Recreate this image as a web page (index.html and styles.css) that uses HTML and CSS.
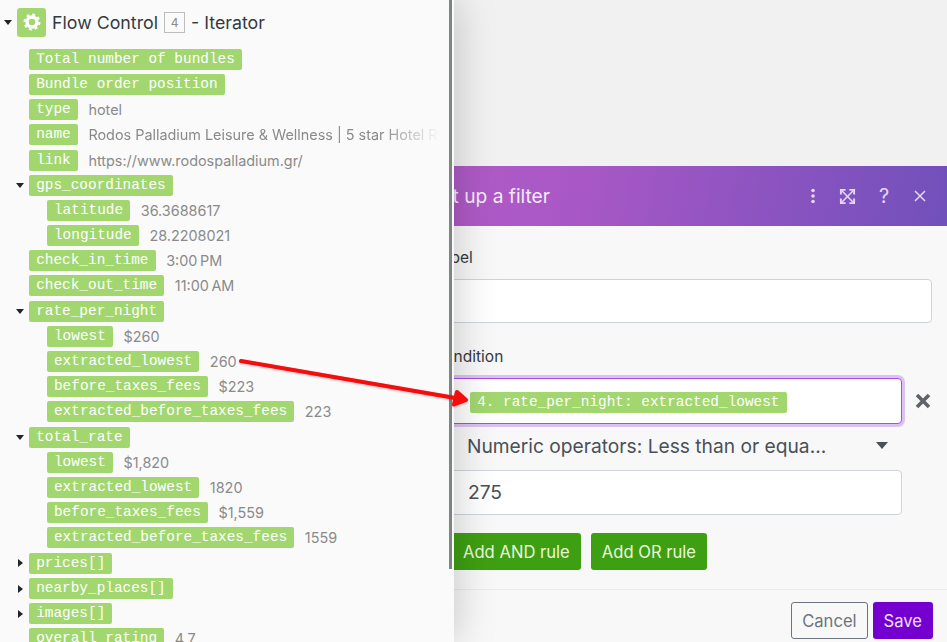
FILE: index.html
```html
<!DOCTYPE html>
<html lang="en">
<head>
<meta charset="utf-8">
<title>Set up a filter</title>
<link rel="stylesheet" href="styles.css">
</head>
<body>
<section class="modal">
  <header class="modal-head">
    <h2 class="modal-title">Set up a filter</h2>
    <div class="modal-tools">
      <svg class="tool-dots" width="16" height="18" viewBox="0 0 16 18"><g fill="#e6d8f3"><circle cx="8" cy="3.500" r="1.800"/><circle cx="8" cy="9" r="1.800"/><circle cx="8" cy="14.500" r="1.800"/></g></svg>
      <svg class="tool-expand" width="17" height="17" viewBox="0 0 18 18" fill="none" stroke="#e6d8f3" stroke-width="1.600"><path d="M3 3l12 12M15 3L3 15"/><path d="M7 2H2v5M11 2h5v5M7 16H2v-5M11 16h5v-5" stroke-width="2"/></svg>
      <span class="tool-q">?</span>
      <svg class="tool-x" width="14" height="14" viewBox="0 0 14 14" fill="none" stroke="#e6d8f3" stroke-width="1.500"><path d="M2 2l10 10M12 2L2 12"/></svg>
    </div>
  </header>
  <div class="modal-body">
    <label class="field-label">Label</label>
    <div class="input input-wide"></div>
    <label class="field-label field-label-cond">Condition</label>
    <div class="cond-row">
      <div class="input input-focus"><span class="pill">4. rate_per_night: extracted_lowest</span></div>
      <svg class="remove" width="16" height="16" viewBox="0 0 16 16" fill="none" stroke="#5f6368" stroke-width="3.600"><path d="M2 2l12 12M14 2L2 14"/></svg>
    </div>
    <div class="select-row">
      <span>Numeric operators: Less than or equa...</span>
      <svg width="14" height="8" viewBox="0 0 14 8"><path d="M1 0h12L7 7z" fill="#495057"/></svg>
    </div>
    <div class="input input-value">275</div>
    <div class="rule-buttons">
      <button class="btn btn-green">Add AND rule</button>
      <button class="btn btn-green">Add OR rule</button>
    </div>
  </div>
  <footer class="modal-foot">
    <button class="btn btn-cancel">Cancel</button>
    <button class="btn btn-save">Save</button>
  </footer>
</section>

<aside class="panel">
  <div class="head">
    <svg class="caret" width="8" height="5" viewBox="0 0 8 5"><path d="M0 0h8L4 5z"/></svg>
    <span class="app-icon">
      <svg width="18" height="18" viewBox="0 0 18 18"><circle cx="9" cy="9" r="5" fill="none" stroke="#fff" stroke-width="3.400"/><circle cx="9" cy="9" r="7.400" fill="none" stroke="#fff" stroke-width="2.200" stroke-dasharray="2.900 2.900"/></svg>
    </span>
    <span class="head-text">Flow Control</span>
    <span class="num-box">4</span>
    <span class="head-text">- Iterator</span>
  </div>
  <ul class="tree">
    <li class="row"><span class="pill">Total number of bundles</span></li>
    <li class="row"><span class="pill">Bundle order position</span></li>
    <li class="row"><span class="pill">type</span><span class="val">hotel</span></li>
    <li class="row"><span class="pill">name</span><span class="val val-fade">Rodos Palladium Leisure &amp; Wellness | 5 star Hotel Rhodes</span></li>
    <li class="row"><span class="pill">link</span><span class="val">https://www.rodospalladium.gr/</span></li>
    <li class="row"><svg class="caret twist" width="8" height="5" viewBox="0 0 8 5"><path d="M0 0h8L4 5z"/></svg><span class="pill">gps_coordinates</span></li>
    <li class="row sub"><span class="pill">latitude</span><span class="val">36.3688617</span></li>
    <li class="row sub"><span class="pill">longitude</span><span class="val">28.2208021</span></li>
    <li class="row"><span class="pill">check_in_time</span><span class="val">3:00&#8239;PM</span></li>
    <li class="row"><span class="pill">check_out_time</span><span class="val">11:00&#8239;AM</span></li>
    <li class="row"><svg class="caret twist" width="8" height="5" viewBox="0 0 8 5"><path d="M0 0h8L4 5z"/></svg><span class="pill">rate_per_night</span></li>
    <li class="row sub"><span class="pill">lowest</span><span class="val">$260</span></li>
    <li class="row sub"><span class="pill">extracted_lowest</span><span class="val">260</span></li>
    <li class="row sub"><span class="pill">before_taxes_fees</span><span class="val">$223</span></li>
    <li class="row sub"><span class="pill">extracted_before_taxes_fees</span><span class="val">223</span></li>
    <li class="row"><svg class="caret twist" width="8" height="5" viewBox="0 0 8 5"><path d="M0 0h8L4 5z"/></svg><span class="pill">total_rate</span></li>
    <li class="row sub"><span class="pill">lowest</span><span class="val">$1,820</span></li>
    <li class="row sub"><span class="pill">extracted_lowest</span><span class="val">1820</span></li>
    <li class="row sub"><span class="pill">before_taxes_fees</span><span class="val">$1,559</span></li>
    <li class="row sub"><span class="pill">extracted_before_taxes_fees</span><span class="val">1559</span></li>
    <li class="row"><svg class="caret twist side" width="5" height="8" viewBox="0 0 5 8"><path d="M0 0v8l5-4z"/></svg><span class="pill">prices[]</span></li>
    <li class="row"><svg class="caret twist side" width="5" height="8" viewBox="0 0 5 8"><path d="M0 0v8l5-4z"/></svg><span class="pill">nearby_places[]</span></li>
    <li class="row"><svg class="caret twist side" width="5" height="8" viewBox="0 0 5 8"><path d="M0 0v8l5-4z"/></svg><span class="pill">images[]</span></li>
    <li class="row"><span class="pill">overall_rating</span><span class="val">4.7</span></li>
  </ul>
  <div class="scrollbar"></div>
</aside>

<svg class="arrow" width="947" height="642" viewBox="0 0 947 642">
  <defs><filter id="s" x="-5%" y="-20%" width="110%" height="140%"><feDropShadow dx="0" dy="1" stdDeviation="1" flood-color="#000" flood-opacity=".25"/></filter></defs>
  <g filter="url(#s)" fill="none" stroke="#f4080c" stroke-width="4" stroke-linecap="round" stroke-linejoin="round"><path d="M241 361L464 399.500"/><path d="M457 392l9 8-12 4.500z" fill="#f4080c"/></g>
</svg>
</body>
</html>
```
FILE: styles.css
```css
* { box-sizing: border-box; }
html, body { height: 100%; }
body {
  margin: 0;
  position: relative;
  overflow: hidden;
  background: #f1f1f1;
  font-family: Inter, "Liberation Sans", sans-serif;
  font-size: 14.4px;
}
.panel {
  position: absolute;
  left: 0;
  top: 0;
  bottom: 0;
  width: 454px;
  background: #fafafa;
  box-shadow: 0 0 40px rgba(0, 0, 0, .22);
  overflow: hidden;
  z-index: 2;
}
.scrollbar {
  position: absolute;
  left: 449px;
  top: 0;
  width: 3px;
  height: 569px;
  background: #7f8583;
}
.head {
  display: flex;
  align-items: center;
  height: 44px;
  padding: 0 0 0 4px;
  color: #343a40;
  font-size: 17.800px;
}
.caret { fill: #212529; flex: none; }
.app-icon {
  display: flex;
  align-items: center;
  justify-content: center;
  width: 29px;
  height: 29px;
  margin: 0 6px 0 5px;
  border-radius: 3px;
  background: #a2d76f;
}
.num-box {
  width: 21px;
  height: 21px;
  margin: 0 6px;
  border: 1px solid #bdbdbd;
  color: #8a8a8a;
  font-size: 12px;
  line-height: 19px;
  text-align: center;
}
.tree {
  list-style: none;
  margin: 2.700px 0 0;
  padding: 0 0 0 29px;
}
.row {
  display: flex;
  align-items: center;
  position: relative;
  height: 25.200px;
  white-space: nowrap;
}
.sub { padding-left: 17.800px; }
.twist { position: absolute; left: -13px; top: 10px; }
.side { left: -11px; top: 9px; }
.pill {
  flex: none;
  display: inline-block;
  height: 21px;
  padding: 0 7.200px;
  border-radius: 2px;
  background: #a2d76f;
  color: #fff;
  font-family: "Liberation Mono", monospace;
  font-size: 14.400px;
  line-height: 20px;
}
.val {
  margin-left: 10.500px;
  color: #8a8a8a;
}
.val-fade {
  width: 352px;
  overflow: hidden;
  -webkit-mask-image: linear-gradient(90deg, #000 83%, transparent 100%);
  mask-image: linear-gradient(90deg, #000 83%, transparent 100%);
}
.modal {
  position: absolute;
  left: 418px;
  top: 166px;
  right: 0;
  bottom: 0;
  background: #f8f8f8;
}
.modal-head {
  display: flex;
  align-items: center;
  justify-content: space-between;
  height: 60px;
  padding: 0 20px 0 11px;
  background: linear-gradient(100deg, #b25bc7 0%, #a858c6 30%, #7150bb 100%);
}
.modal-title {
  margin: 0;
  color: #f3e9f8;
  font-size: 19.200px;
  font-weight: 400;
}
.modal-tools { display: flex; align-items: center; }
.tool-expand { margin-left: 18px; }
.tool-q { width: 14px; margin-left: 21px; color: #e6d8f3; font-size: 20px; text-align: center; }
.tool-x { margin-left: 22px; }
.modal-body { padding: 21px 15px 0 15px; height: 364px; border-bottom: 1px solid #ebebeb; }
.field-label { display: block; color: #343a40; font-size: 15.500px; line-height: 22px; }
.field-label-cond { margin-top: 23px; }
.input {
  border: 1px solid #ced4da;
  border-radius: 4px;
  background: #fff;
}
.input-wide { height: 44px; margin-top: 10px; }
.cond-row { display: flex; align-items: center; margin-top: 10px; gap: 13px; }
.input-focus {
  flex: 0 0 469px;
  display: flex;
  align-items: center;
  height: 46px;
  padding: 3px 0 0 36px;
  border: 1.500px solid #a64ee8;
  box-shadow: 0 0 0 3px #dcc2f0;
}
.select-row {
  display: flex;
  align-items: center;
  justify-content: space-between;
  width: 471px;
  padding: 0 15px 0 34px;
  margin-top: 4px;
  height: 36px;
  color: #495057;
  font-size: 19.200px;
}
.input-value {
  width: 469px;
  height: 45px;
  margin-top: 6px;
  padding-left: 34px;
  color: #495057;
  font-size: 19.200px;
  line-height: 43px;
}
.rule-buttons { display: flex; gap: 10px; margin-top: 18px; padding-left: 19px; }
.btn {
  height: 37px;
  padding: 0 10px;
  border: 1px solid transparent;
  border-radius: 3px;
  font-family: inherit;
  font-size: 16.600px;
}
.btn-green { background: #3f9f12; color: #e8f7dc; }
.modal-foot {
  display: flex;
  justify-content: flex-end;
  gap: 5px;
  padding: 12px 14px 0 0;
}
.btn-cancel { background: #f8f8f8; border-color: #6c757d; color: #6c757d; }
.btn-save { background: #7400cf; color: #efe0fb; }
.arrow { position: absolute; left: 0; top: 0; z-index: 3; pointer-events: none; }
```
